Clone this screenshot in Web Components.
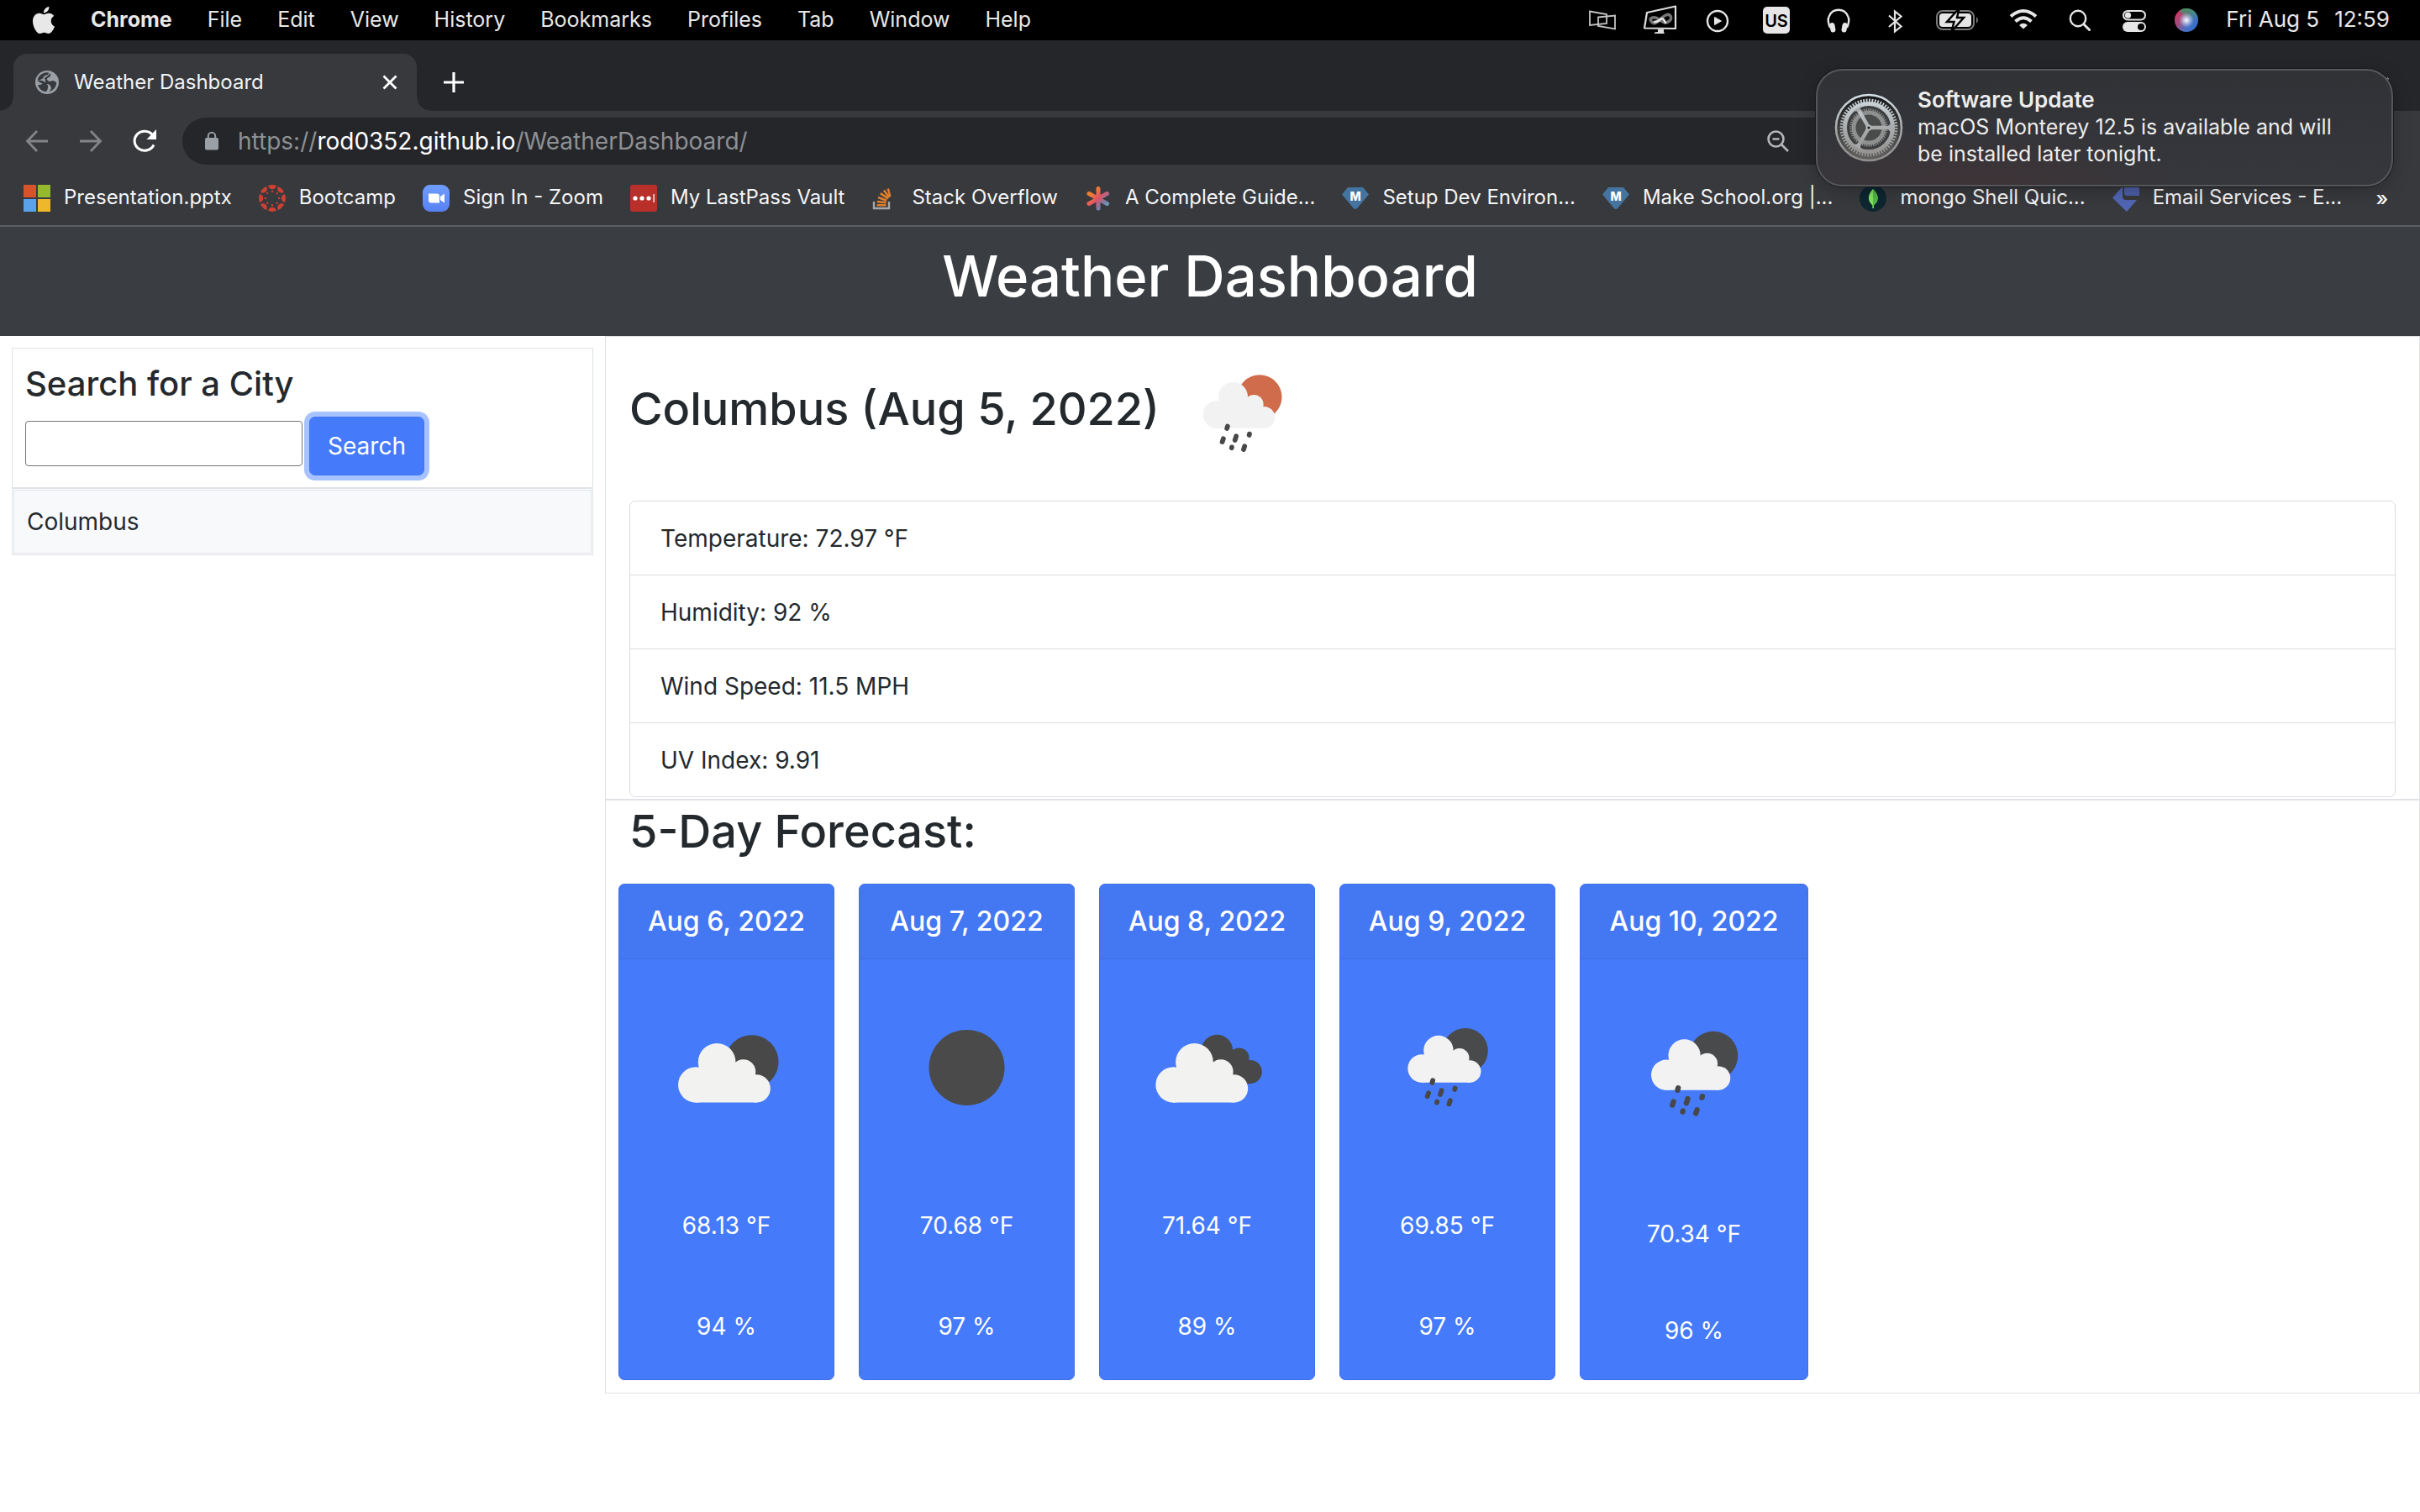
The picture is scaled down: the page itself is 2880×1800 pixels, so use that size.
<!DOCTYPE html>
<html lang="en">
<head>
<meta charset="utf-8">
<title>Weather Dashboard</title>
<style>
  html, body { margin: 0; min-height: 100%; background: #fff; }
  body { font-family: Inter, "Liberation Sans", sans-serif; color: #24292d; }
</style>
</head>
<body>
<desktop-screen></desktop-screen>

<script>
/* Registers an element; `render` runs on connection and whenever an observed attribute changes. */
const define = (name, html, render, observed = []) => {
  const template = document.createElement('template');
  template.innerHTML = html;
  customElements.define(name, class extends HTMLElement {
    static observedAttributes = observed;
    constructor() {
      super();
      this.attachShadow({ mode: 'open' }).append(template.content.cloneNode(true));
    }
    connectedCallback() { if (render) render(this, this.shadowRoot); }
    attributeChangedCallback() { if (render) render(this, this.shadowRoot); }
  });
};

/* ---------- icons ---------- */
const cloud = `<circle cx="30.2" cy="62" r="11.6"/><circle cx="43.8" cy="47.2" r="12.2"/><circle cx="61" cy="53.5" r="8"/><circle cx="69.5" cy="64.4" r="9.1"/><path d="M30 52L44 44L61 50L70 60V73.5H30Z"/>`;
const drops = `<g stroke="#484848" stroke-width="3.2" stroke-linecap="round"><path d="M40.5 59.2L40.1 60.600M37.700 67.400L37 69.500M46.200 65.700L45.400 68.300M55 64.200L54.800 65M43.300 73L43.200 73.500M51.800 72.300L51.100 74.500"/></g>`;
const rain = c => `<circle cx="61.7" cy="39.8" r="14.7" fill="${c}"/><g transform="translate(9.5 2.2) scale(.793)" fill="#f2f2f2">${cloud}</g>${drops}`;
const weather = {
  'rain-day': rain('#d06b4c'),
  'rain-night': rain('#484a4c'),
  'few': `<circle cx="66.5" cy="47" r="17.4" fill="#484848"/><g fill="#f2f2f0">${cloud}</g>`,
  'clear': `<circle cx="50" cy="50.8" r="24.6" fill="#4a4a4a"/>`,
  'broken': `<g fill="#484848"><circle cx="56.5" cy="39.6" r="10.2"/><circle cx="70.8" cy="44.6" r="6.6"/><circle cx="78" cy="53.6" r="7.7"/><path d="M56 40H71L78 50V61.3H56Z"/></g><g fill="#f2f2f0" transform="translate(-2 0)">${cloud}</g>`
};

const rays = (n, fn) => Array.from({ length: n }, (_, i) => fn(i * 360 / n)).join('');
const marks = {
  office: `<path fill="#d8532c" d="M0 0h15v15H0z"/><path fill="#94b92d" d="M17 0h15v15H17z"/><path fill="#5aa2ea" d="M0 17h15v15H0z"/><path fill="#eeb82c" d="M17 17h15v15H17z"/>`,
  canvas: `<g fill="#cf4032">${rays(8, a => `<g transform="rotate(${a} 16 16)"><path d="M11 1.2Q16 -1 21 1.2Q19.6 5.2 16 5.2T11 1.2Z"/><circle cx="16" cy="7.8" r="1.2"/></g>`)}</g>`,
  zoom: `<defs><linearGradient id="z" x2="0" y2="1"><stop stop-color="#6f9dff"/><stop offset="1" stop-color="#5781f3"/></linearGradient></defs><rect width="32" height="32" rx="9" fill="url(#z)"/><path fill="#fff" d="M7 10.5h10a3 3 0 0 1 3 3v8H10a3 3 0 0 1-3-3zM21 14l5-3.5v11L21 18z"/>`,
  lastpass: `<rect width="32" height="32" rx="3" fill="#b9302b"/><g fill="#fff"><circle cx="6" cy="16" r="2.600"/><circle cx="14" cy="16" r="2.600"/><circle cx="22" cy="16" r="2.600"/><path d="M27.500 11h1.300v10h-1.300z"/></g>`,
  stack: `<path d="M3 20v8h18V20" fill="none" stroke="#a5a8aa" stroke-width="2.400"/><g stroke="#dd7f2c" stroke-width="2.600"><path d="M6.500 24.300h11M6.800 20l10.800 1.300M8 15.100l10.200 3.600M10.800 10.100l9 6.300M15 6.500l6.300 8.700M19.800 4.500l2.500 9.500"/></g>`,
  star: `<defs><linearGradient id="s" gradientUnits="userSpaceOnUse" x1="4" y1="4" x2="28" y2="28"><stop offset=".2" stop-color="#ef7e33"/><stop offset=".5" stop-color="#e05466"/><stop offset=".75" stop-color="#7c7ba6"/><stop offset="1" stop-color="#55b8c4"/></linearGradient></defs><g stroke="url(#s)" stroke-width="5" stroke-linecap="round"><path d="M16.010 4.500V28M5 10.500L26.500 22.500M26.500 10.500L5 22.500"/></g>`,
  pin: `<path fill="#44749f" d="M7 3h18l7 8.500L19 27q-3 4-6 0L0 11.500z"/><text x="16" y="18.500" font-size="14" font-weight="800" text-anchor="middle" fill="#fff">M</text>`,
  mongo: `<circle cx="16" cy="16" r="16" fill="#0d2630"/><path fill="#7fe35f" d="M16 5Q27 16 17 24.500V28h-1.600v-3.500Q6 16 16 5z"/><path fill="#52b548" d="M16 5Q27 16 16 25z"/>`,
  email: `<path fill="#4d5ea6" d="M14 0h18v13H18q-4 0-4-3z"/><path fill="#5065b4" d="M12 2L0 15.500L17 32l12-14H16q-4 0-4-4z"/>`
};

const status = {
  screens: [40, `<g fill="none" stroke="#c4c4c4" stroke-width="1.800"><path d="M-15-10.500L5-7V4L-15 6Z"/><path d="M-5-3.500L15-5.500V10.500L-5 7Z"/></g>`],
  monitor: [34, `<path d="M-16-9L18-16.500V10L-19 9.500Z" fill="none" stroke="#dedede" stroke-width="2.200" stroke-linejoin="round"/><g fill="none" stroke-linecap="round"><path d="M-11 1C-8 6-4 3 0-1S9-9 12-5 8 5 3 2-5-4-9-3-12 0-11 1" stroke="#777" stroke-width="3.500"/><path d="M-7 2Q-3 2 0-1T6 3" stroke="#e6e6e6" stroke-width="2.500"/></g><path fill="#dedede" d="M-3 11H4V14L5 16H-7V14.500L-3 14Z"/>`],
  play: [38, `<circle r="12" cy="1" fill="none" stroke="#e6e6e6" stroke-width="2.400"/><path fill="#e6e6e6" stroke="#e6e6e6" stroke-linejoin="round" d="M-3.500-3.500L4.500 1L-3.500 5.500Z"/>`],
  us: [38, `<rect x="-16" y="-16" width="32" height="32" rx="5" fill="#e6e6e6"/><text y="7.500" font-size="20" font-weight="600" text-anchor="middle" fill="#000">US</text>`],
  phones: [46, `<path d="M-10 9Q-14 0-11-5A12 12 0 0 1 11-5Q14 0 10 9" fill="none" stroke="#e6e6e6" stroke-width="2.400"/><rect x="-10" y="3" width="6" height="11.500" rx="3" fill="#e6e6e6" transform="rotate(-10 -7 9)"/><rect x="4" y="3" width="6" height="11.500" rx="3" fill="#e6e6e6" transform="rotate(10 7 9)"/>`],
  bluetooth: [24, `<path d="M-7-5.500L7.500 7.500L0 13.500V-10.500L7.500-4.500L-7 8" fill="none" stroke="#e6e6e6" stroke-width="2.200"/>`],
  battery: [60, `<rect x="-24" y="-11" width="44" height="22" rx="7" fill="none" stroke="#7a7a7a" stroke-width="2"/><path d="M23-4q4 4 0 8z" fill="#7a7a7a"/><rect x="-21" y="-8" width="38" height="16" rx="4" fill="#e6e6e6"/><path d="M2.500-14L-12 2H-3.500L-6.500 13.500L8-3H0Z" fill="#e6e6e6" stroke="#000" stroke-width="2.500"/>`],
  wifi: [34, `<g fill="none" stroke="#e6e6e6" stroke-width="4"><path d="M-15-4.500Q0-17.500 15-4.500"/><path d="M-9.500 1.500Q0-7 9.500 1.500"/></g><path d="M-5 6Q0 1.500 5 6L0 10.500Z" fill="#e6e6e6"/>`],
  search: [36, `<circle cx="-2" cy="-2" r="9.200" fill="none" stroke="#e6e6e6" stroke-width="2.400"/><path d="M5 5L11.500 11.500" stroke="#e6e6e6" stroke-width="3" stroke-linecap="round"/>`],
  control: [30, `<rect x="-13" y="-11" width="26" height="10.500" rx="5.200" fill="none" stroke="#e6e6e6" stroke-width="2"/><circle cx="-7.500" cy="-5.800" r="3.600" fill="#e6e6e6"/><rect x="-14" y="2" width="28" height="12" rx="6" fill="#e6e6e6"/><circle cx="8" cy="8" r="4" fill="#000"/>`],
  siri: [30, `<defs><linearGradient id="a" x1="0" y1=".2" x2="1" y2=".8"><stop stop-color="#d8345f"/><stop offset=".3" stop-color="#a34a78"/><stop offset=".6" stop-color="#4e6fc0"/><stop offset="1" stop-color="#2f6fd0"/></linearGradient><linearGradient id="g" x2="0" y2="1"><stop stop-color="#3f9468"/><stop offset="1" stop-color="#3f9468" stop-opacity="0"/></linearGradient><radialGradient id="b"><stop stop-color="#fff"/><stop offset="1" stop-color="#cfe4ff" stop-opacity="0"/></radialGradient></defs><circle r="14" fill="url(#a)"/><path d="M-8-11.500A14 14 0 0 1 14 0Q0 0-8-11.500Z" fill="url(#g)"/><circle r="9" fill="url(#b)"/>`]
};

define('weather-icon', `
  <style>:host{display:block;aspect-ratio:1} svg{display:block;width:100%;height:100%}</style>
  <svg viewBox="0 0 100 100" aria-hidden="true"></svg>`,
  (el, root) => { root.querySelector('svg').innerHTML = weather[el.getAttribute('name')] || ''; }, ['name']);

define('status-icon', `
  <style>:host{display:block} svg{display:block;overflow:visible}</style>
  <svg height="48" aria-hidden="true"></svg>`,
  (el, root) => {
    const [w, art] = status[el.getAttribute('name')];
    const svg = root.querySelector('svg');
    svg.setAttribute('width', w);
    svg.setAttribute('viewBox', `${-w / 2} -24 ${w} 48`);
    svg.innerHTML = art;
  });

/* ---------- system menu bar ---------- */
define('menu-bar', `
  <style>
    :host{display:flex;height:48px;background:#000;color:#e8e8e8;font-size:25px;line-height:30px;align-items:center;padding:0 36px 0 38px}
    nav{display:flex;align-items:center;gap:42px}
    .app{font-weight:700}
    .logo{display:block}
    a{color:inherit;text-decoration:none;white-space:nowrap}
    .status{display:flex;align-items:center;gap:32px;margin-left:auto}
    time{display:flex;gap:18px;white-space:nowrap;font-size:26px}
    a,time{padding-bottom:2px}
  </style>
  <nav aria-label="Menu bar">
    <svg class="logo" width="28" height="32" viewBox="1.5 0 21 24" fill="#e8e8e8" aria-hidden="true"><path d="M12.152 6.896c-.948 0-2.415-1.078-3.960-1.040-2.040.027-3.910 1.183-4.961 3.014-2.117 3.675-.546 9.103 1.519 12.090 1.013 1.454 2.208 3.090 3.792 3.039 1.520-.065 2.090-.987 3.935-.987 1.831 0 2.350.987 3.960.948 1.637-.026 2.676-1.480 3.676-2.948 1.156-1.688 1.636-3.325 1.662-3.415-.039-.013-3.182-1.221-3.220-4.857-.026-3.040 2.480-4.494 2.597-4.559-1.429-2.090-3.623-2.324-4.390-2.376-2-.156-3.675 1.090-4.610 1.090zM15.530 3.830c.843-1.012 1.400-2.427 1.245-3.830-1.207.052-2.662.805-3.532 1.818-.780.896-1.454 2.338-1.273 3.714 1.338.104 2.715-.688 3.559-1.701"/></svg>
    <a class="app" href="#">Chrome</a><a href="#">File</a><a href="#">Edit</a><a href="#">View</a><a href="#">History</a><a href="#">Bookmarks</a><a href="#">Profiles</a><a href="#">Tab</a><a href="#">Window</a><a href="#">Help</a>
  </nav>
  <div class="status">
    <status-icon name="screens"></status-icon><status-icon name="monitor"></status-icon><status-icon name="play"></status-icon><status-icon name="us"></status-icon><status-icon name="phones"></status-icon><status-icon name="bluetooth"></status-icon><status-icon name="battery"></status-icon><status-icon name="wifi"></status-icon><status-icon name="search"></status-icon><status-icon name="control"></status-icon><status-icon name="siri"></status-icon>
    <time><span>Fri Aug 5</span><span>12:59</span></time>
  </div>`);

/* ---------- browser chrome ---------- */
define('tab-strip', `
  <style>
    :host{display:flex;height:84px;background:#25262a;align-items:flex-end;padding-right:36px;color:#f1f3f4}
    .tab{display:flex;align-items:center;box-sizing:border-box;width:480px;height:68px;margin-left:16px;padding:0 20px 0 26px;background:#38393d;border-radius:16px 16px 0 0;font-size:24px;position:relative}
    .tab::before,.tab::after{content:"";position:absolute;bottom:0;width:16px;height:16px}
    .tab::before{left:-16px;background:radial-gradient(circle at 0 0,transparent 15px,#38393d 16px)}
    .tab::after{right:-16px;background:radial-gradient(circle at 100% 0,transparent 15px,#38393d 16px)}
    .name{flex:1;margin-left:18px;padding-bottom:2px}
    button{border:0;background:none;padding:0;color:inherit;display:grid;place-items:center;width:24px;height:68px}
    .new{margin-left:32px}
    .more{margin-left:auto}
  </style>
  <div class="tab">
    <svg width="28" height="28" viewBox="0 0 28 28" aria-hidden="true"><circle cx="14" cy="14" r="14" fill="#9aa0a6"/><path fill="#38393d" d="M16 2.500A11.500 11.500 0 0 0 2.600 11.500Q8 11 10.500 13t3 3q2 1 1.500 4.500t-2 4.800A11.500 11.500 0 0 1 3 17q4 .500 5.500-1.500Q5 14 2.600 12.500L9 9.500Q10 6 13 5.500T16 2.500zM18 3.300q1 3-1 4.200t-3 2 1 2.500 4 .500 3.500 0 2.800 1.500A11.500 11.500 0 0 1 16 25.300q4-3 2.500-6.300T14.500 16 12 13 11 9.500 14 7z"/></svg>
    <span class="name">Weather Dashboard</span>
    <button aria-label="Close tab"><svg width="18" height="18" viewBox="0 0 18 18"><path d="M1.500 1.500l15 15M16.500 1.500l-15 15" stroke="#fff" stroke-width="2.800"/></svg></button>
  </div>
  <button class="new" aria-label="New tab"><svg width="24" height="24" viewBox="0 0 24 24"><path d="M12 0v24M0 12h24" stroke="#fff" stroke-width="3.200"/></svg></button>
  <button class="more" aria-label="Search tabs"><svg width="24" height="14" viewBox="0 0 24 14"><path d="M2 2l10 9L22 2" fill="none" stroke="#fff" stroke-width="3"/></svg></button>`);

define('tool-bar', `
  <style>
    :host{display:flex;height:72px;background:#38393d;align-items:center;padding:0 180px 0 28px}
    button{border:0;background:none;padding:0;display:grid;place-items:center;width:32px;height:56px}
    .nav{display:flex;gap:32px}
    .omni{flex:1;display:flex;align-items:center;height:56px;margin-left:29px;border-radius:28px;background:#25262a;padding:0 568px 0 26px;font-size:28px;color:#8e9093}
    .url{flex:1;margin-left:22px;white-space:nowrap}
    b{font-weight:400;color:#fff}
  </style>
  <div class="nav">
    <button aria-label="Back"><svg width="28" height="28" viewBox="0 0 28 28" fill="none" stroke="#838487" stroke-width="2.800"><path d="M27 14H3M14 2L2.500 14L14 26"/></svg></button>
    <button aria-label="Forward"><svg width="28" height="28" viewBox="0 0 28 28" fill="none" stroke="#838487" stroke-width="2.800"><path d="M1 14h24M14 2l11.500 12L14 26"/></svg></button>
    <button aria-label="Reload"><svg width="28" height="28" viewBox="0 0 28 28"><path d="M25 18.500A12 11.500 0 1 1 23.500 6.500" fill="none" stroke="#fff" stroke-width="3"/><path d="M28 0V12H16.500Z" fill="#fff"/></svg></button>
  </div>
  <div class="omni">
    <svg width="18" height="24" viewBox="0 0 18 24" aria-hidden="true"><rect x="1" y="8" width="16" height="14.500" rx="2" fill="#9aa0a6"/><path d="M4.800 9V6a4.200 4.200 0 0 1 8.400 0v3" fill="none" stroke="#9aa0a6" stroke-width="2"/></svg>
    <div class="url" role="textbox" aria-label="Address" contenteditable="true" spellcheck="false">https://<b>rod0352.github.io</b>/WeatherDashboard/</div>
    <button aria-label="Zoom"><svg width="28" height="28" viewBox="0 0 28 28" fill="none" stroke="#b4b6b9" stroke-width="2.600"><circle cx="11.500" cy="11.500" r="9"/><path d="M18 18l8 8M7.500 11.500h8"/></svg></button>
  </div>`);

define('bookmark-link', `
  <style>
    :host{display:block}
    a{display:flex;align-items:center;gap:16px;color:#f4f5f6;text-decoration:none;font-size:24px;line-height:30px;white-space:nowrap}
    svg{display:block}
    span{padding-bottom:2px}
  </style>
  <a href="#"><svg width="32" height="32" viewBox="0 0 32 32" aria-hidden="true"></svg><span><slot></slot></span></a>`,
  (el, root) => { root.querySelector('svg').innerHTML = marks[el.getAttribute('mark')]; });

define('bookmark-bar', `
  <style>
    :host{display:flex;height:64px;background:#38393d;border-bottom:2px solid #5f6063;align-items:center;padding:0 38px 0 28px;gap:32px}
    button{border:0;background:none;padding:0;margin-left:auto;color:#fff;font:500 24px Inter,sans-serif}
  </style>
  <slot></slot><button aria-label="More bookmarks">»</button>`);

define('system-notification', `
  <style>
    :host{position:absolute;top:82px;right:32px;box-sizing:border-box;width:687px;height:140px;display:flex;align-items:center;gap:17px;padding:0 20px;border:2px solid #56575b;border-radius:32px;box-shadow:0 0 0 1px #17181a,0 4px 20px rgba(0,0,0,.25);background:radial-gradient(ellipse at 28% 100%,#3d3336 0,transparent 35%),linear-gradient(#313236,#36373c);color:#ececec;font-size:25px;line-height:32px}
    ::slotted(*){display:block;margin:0}
    ::slotted(strong){font-weight:600;font-size:26px}
    .body{padding-bottom:2px;white-space:nowrap}
    svg{display:block;flex:none}
  </style>
  <svg width="82" height="82" viewBox="-41 -41 82 82" aria-hidden="true">
    <defs>
      <linearGradient id="m" gradientUnits="userSpaceOnUse" x1="0" y1="-40" x2="0" y2="40"><stop stop-color="#d5e0e7"/><stop offset=".5" stop-color="#a9acad"/><stop offset="1" stop-color="#8f8c8a"/></linearGradient>
      <linearGradient id="d" x2="0" y2="1"><stop stop-color="#141617"/><stop offset="1" stop-color="#626261"/></linearGradient>
    </defs>
    <circle r="39" fill="url(#d)" stroke="url(#m)" stroke-width="2.500"/>
    <circle r="32.500" fill="none" stroke="url(#m)" stroke-width="4" stroke-dasharray="1.800 1.600"/>
    <circle r="28.500" fill="#3c3e3f" stroke="url(#m)" stroke-width="5"/>
    <circle r="21.500" fill="none" stroke="#8b8b8b" stroke-width="2.500" stroke-dasharray="1.400 1.300"/>
    <circle r="18" fill="#4a4b4b" stroke="#8e8f8f" stroke-width="5"/>
    <g stroke="url(#m)" stroke-width="4.500"><path d="M0 0L28 .010M0 0L-14-24.300M0 0L-14 24.300"/></g>
    <path d="M27-6V6L21 0ZM-19-20L-9-26L-11-19ZM-19 20L-9 26L-11 19Z" fill="#a9acad"/>
    <circle r="3.500" fill="#b4b6b7"/><circle r="1.600" fill="#222"/>
  </svg>
  <div class="body"><slot></slot></div>`);

/* ---------- page ---------- */
define('page-header', `
  <style>
    :host{display:block;background:#3a3d42;color:#fff;padding:16px 0 28px;text-align:center}
    h1{margin:0;font-size:67px;line-height:86px;font-weight:500}
  </style>
  <h1><slot></slot></h1>`);

define('city-search', `
  <style>
    :host{display:block;padding:14px}
    form{border:1px solid #dee2e6;padding:16px 16px 14px 15px}
    h2{margin:0 0 13px;font-size:40px;line-height:52px;font-weight:500}
    .row{display:flex;align-items:flex-start;gap:8px}
    input{box-sizing:border-box;width:330px;height:54px;margin:5px 0 0;padding:0 8px;border:1px solid #767676;border-radius:4px;font:28px Inter,sans-serif;background:#fff}
    button{box-sizing:border-box;height:70px;width:137px;padding:0;border:1px solid #3f74f5;border-radius:7px;background:#457bfb;color:#fff;font:28px Inter,sans-serif;box-shadow:0 0 0 6px #a6c3ff}
    ul{list-style:none;margin:0;padding:1px;border:1px solid #dee2e6}
    li{border:1px solid #dee2e6;background:#f8f9fb;padding:16px 15px;font-size:28px;line-height:42px}
  </style>
  <form onsubmit="return false">
    <h2><label for="city">Search for a City</label></h2>
    <div class="row"><input id="city" type="text"><button type="submit">Search</button></div>
  </form>
  <ul><li><slot></slot></li></ul>`);

define('current-weather', `
  <style>
    :host{display:block;border:1px solid #dee2e6;padding:0 28px 2px}
    header{display:flex;align-items:center;gap:8px;margin-bottom:15px}
    h2{margin:0;padding-bottom:8px;font-size:54px;line-height:68px;font-weight:500}
    weather-icon{width:180px}
    ul{list-style:none;margin:0;padding:0;border:1px solid #dcdddf;border-radius:7px}
    ::slotted(li){display:block;padding:23px 36px 21px;font-size:28px;line-height:43px}
    ::slotted(li:not(:last-child)){border-bottom:1px solid #dcdddf}
  </style>
  <header><h2></h2><weather-icon name="rain-day"></weather-icon></header>
  <ul><slot></slot></ul>`,
  (el, root) => { root.querySelector('h2').textContent = el.getAttribute('heading'); });

define('forecast-day', `
  <style>
    :host{display:flex;flex-direction:column;box-sizing:border-box;border:1px solid #3f70e3;border-radius:7px;background:#457bfb;color:#fff;text-align:center;overflow:hidden}
    h3{margin:0;padding:22px 0;font-size:32px;line-height:44px;font-weight:500;background:#4477f2;border-bottom:1px solid #3d6cdd;white-space:nowrap}
    .body{flex:1;display:flex;flex-direction:column;justify-content:space-between;padding:36px}
    .body::after{content:""}
    p{margin:72px 0 0;font-size:28px;line-height:43px}
  </style>
  <h3></h3>
  <div class="body"><weather-icon></weather-icon><p class="t"></p><p class="h"></p></div>`,
  (el, root) => {
    root.querySelector('weather-icon').setAttribute('name', el.getAttribute('icon'));
    root.querySelector('h3').textContent = el.getAttribute('date');
    root.querySelector('.t').textContent = el.getAttribute('temp');
    root.querySelector('.h').textContent = el.getAttribute('humidity');
  });

define('forecast-panel', `
  <style>
    :host{display:block;border:1px solid #dee2e6;padding:3px 15px 15px}
    h2{margin:0 13px 28px;font-size:54px;line-height:68px;font-weight:500}
    .days{display:grid;grid-template-columns:repeat(4,257px) 272px;gap:29px}
  </style>
  <h2>5-Day Forecast:</h2>
  <div class="days"><slot></slot></div>`);

define('desktop-screen', `
  <style>
    :host{display:block;position:relative}
    main{display:grid;grid-template-columns:1fr 3fr;align-items:start}
    main>*{min-width:0}
  </style>
  <menu-bar></menu-bar>
  <tab-strip></tab-strip>
  <tool-bar></tool-bar>
  <bookmark-bar>
    <bookmark-link mark="office">Presentation.pptx</bookmark-link>
    <bookmark-link mark="canvas">Bootcamp</bookmark-link>
    <bookmark-link mark="zoom">Sign In - Zoom</bookmark-link>
    <bookmark-link mark="lastpass">My LastPass Vault</bookmark-link>
    <bookmark-link mark="stack">Stack Overflow</bookmark-link>
    <bookmark-link mark="star">A Complete Guide...</bookmark-link>
    <bookmark-link mark="pin">Setup Dev Environ...</bookmark-link>
    <bookmark-link mark="pin">Make School.org |...</bookmark-link>
    <bookmark-link mark="mongo">mongo Shell Quic...</bookmark-link>
    <bookmark-link mark="email">Email Services - E...</bookmark-link>
  </bookmark-bar>
  <page-header>Weather Dashboard</page-header>
  <main>
    <city-search>Columbus</city-search>
    <div>
      <current-weather heading="Columbus (Aug 5, 2022)">
        <li>Temperature: 72.97 °F</li>
        <li>Humidity: 92 %</li>
        <li>Wind Speed: 11.5 MPH</li>
        <li>UV Index: 9.91</li>
      </current-weather>
      <forecast-panel>
        <forecast-day date="Aug 6, 2022" icon="few" temp="68.13 °F" humidity="94 %"></forecast-day>
        <forecast-day date="Aug 7, 2022" icon="clear" temp="70.68 °F" humidity="97 %"></forecast-day>
        <forecast-day date="Aug 8, 2022" icon="broken" temp="71.64 °F" humidity="89 %"></forecast-day>
        <forecast-day date="Aug 9, 2022" icon="rain-night" temp="69.85 °F" humidity="97 %"></forecast-day>
        <forecast-day date="Aug 10, 2022" icon="rain-night" temp="70.34 °F" humidity="96 %"></forecast-day>
      </forecast-panel>
    </div>
  </main>
  <system-notification><strong>Software Update</strong><p>macOS Monterey 12.5 is available and will<br>be installed later tonight.</p></system-notification>`);
</script>
</body>
</html>
